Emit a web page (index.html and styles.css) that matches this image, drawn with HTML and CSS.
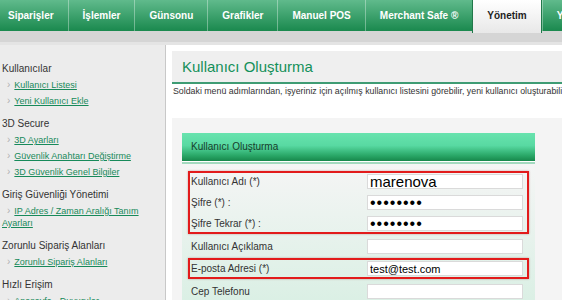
FILE: index.html
```html
<!DOCTYPE html>
<html lang="tr">
<head>
  <meta charset="UTF-8" />
  <title>Yönetim - Kullanıcı Oluşturma</title>
  <link rel="stylesheet" href="styles.css">
</head>
<body>

  <!-- ust menu -->
  <div class="top-nav">
    <div class="tab">Siparişler</div>
    <div class="tab">İşlemler</div>
    <div class="tab">Günsonu</div>
    <div class="tab">Grafikler</div>
    <div class="tab">Manuel POS</div>
    <div class="tab">Merchant Safe ®</div>
    <div class="tab active">Yönetim</div>
    <div class="tab">Yardım</div>
  </div>
  <div class="sub-bar"></div>

  <div class="layout">
    <!-- sol menu -->
    <div class="sidebar">
      <div class="side-group">
        <div class="side-title">Kullanıcılar</div>
        <div class="side-link"><a href="#">Kullanıcı Listesi</a></div>
        <div class="side-link"><a href="#">Yeni Kullanıcı Ekle</a></div>
      </div>
      <div class="side-group">
        <div class="side-title">3D Secure</div>
        <div class="side-link"><a href="#">3D Ayarları</a></div>
        <div class="side-link"><a href="#">Güvenlik Anahtarı Değiştirme</a></div>
        <div class="side-link"><a href="#">3D Güvenlik Genel Bilgiler</a></div>
      </div>
      <div class="side-group">
        <div class="side-title">Giriş Güvenliği Yönetimi</div>
        <div class="side-link"><a href="#">IP Adres / Zaman Aralığı Tanım Ayarları</a></div>
      </div>
      <div class="side-group">
        <div class="side-title">Zorunlu Sipariş Alanları</div>
        <div class="side-link"><a href="#">Zorunlu Sipariş Alanları</a></div>
      </div>
      <div class="side-group">
        <div class="side-title">Hızlı Erişim</div>
        <div class="side-link"><a href="#">Anasayfa - Duyurular</a></div>
      </div>
    </div>

    <!-- icerik -->
    <div class="content">
      <div class="page-title">Kullanıcı Oluşturma</div>
      <p class="intro">Soldaki menü adımlarından, işyeriniz için açılmış kullanıcı listesini görebilir, yeni kullanıcı oluşturabilirsiniz.</p>

      <div class="panel">
        <div class="form-box">
          <div class="form-head">Kullanıcı Oluşturma</div>
          <div class="form-body">
            <div class="mark">
              <div class="row">
                <label>Kullanıcı Adı (*)</label>
                <input type="text" class="big" value="marenova">
              </div>
              <div class="row">
                <label>Şifre (*) :</label>
                <input type="password" class="pass" value="12345678">
              </div>
              <div class="row">
                <label>Şifre Tekrar (*) :</label>
                <input type="password" class="pass" value="12345678">
              </div>
            </div>
            <div class="row plain">
              <label>Kullanıcı Açıklama</label>
              <input type="text" value="">
            </div>
            <div class="mark">
              <div class="row">
                <label>E-posta Adresi (*)</label>
                <input type="text" value="test@test.com">
              </div>
            </div>
            <div class="row plain">
              <label>Cep Telefonu</label>
              <input type="text" value="">
            </div>
          </div>
        </div>
      </div>
    </div>
  </div>

</body>
</html>
```

FILE: styles.css
```css
body {
  margin: 0;
  font-family: Tahoma, "Liberation Sans", Arial, sans-serif;
  font-size: 10px;
  color: #333;
  background: #fff;
  overflow: hidden;
}

/* ust menu */
.top-nav {
  display: flex;
  align-items: flex-start;
  height: 31px;
  background: linear-gradient(#60ba8c, #1a894e);
}

.top-nav .tab {
  height: 31px;
  line-height: 31px;
  padding: 0 14px;
  color: #fff;
  font-weight: bold;
  font-size: 10px;
  white-space: nowrap;
  border-left: 1px solid rgba(255, 255, 255, 0.35);
}

.top-nav .tab:first-child {
  padding-left: 8px;
  border-left: none;
}

.top-nav .tab.active {
  position: relative;
  z-index: 1;
  height: 33px;
  color: #1e1e1e;
  background: linear-gradient(#fff, #e8e8e8);
  border-left: 1px solid #21784a;
  border-right: 1px solid #21784a;
}

.sub-bar {
  height: 11px;
  background: #d5d5d5;
  border-bottom: 3px solid #e4e4e4;
}

.layout {
  display: flex;
}

/* sol menu */
.sidebar {
  flex: none;
  width: 163px;
  min-height: calc(100vh - 45px);
  padding: 16px 0 0 2px;
  background: #ececec;
  border-right: 1px solid #c8c8c8;
}

.side-group {
  margin-bottom: 7px;
}

.side-title,
.side-link {
  padding: 2px 0;
  line-height: 12px;
}

.side-title {
  color: #333;
  font-size: 10px;
}

.side-link {
  font-size: 9px;
}

.side-link::before {
  content: '›';
  color: #b2b2b2;
  font-size: 10px;
  margin: 0 4px 0 5px;
}

.side-link a {
  color: #178a5a;
  text-decoration: underline;
}

/* icerik */
.content {
  flex-grow: 1;
  margin-left: 6px;
}

.page-title {
  margin-top: 6px;
  height: 31px;
  line-height: 31px;
  padding-left: 10px;
  background: #efefef;
  border-bottom: 2px solid #3f9c74;
  font-size: 15px;
  color: #14905a;
}

.intro {
  margin: 0;
  padding: 1px 0 0 1px;
  line-height: 13px;
  font-size: 8.8px;
  white-space: nowrap;
  overflow: hidden;
}

.panel {
  margin-top: 20px;
  padding: 15px 0 0 10px;
  background: #f4f4f4;
  min-height: 200px;
}

.form-box {
  width: 353px;
}

.form-head {
  height: 28px;
  line-height: 28px;
  padding-left: 9px;
  color: #163d2b;
  background: linear-gradient(#68e3ae 0%, #58d9a2 45%, #2aa868 80%, #17874b 100%);
  border-bottom: 1px solid #fff;
}

.form-body {
  display: flex;
  flex-direction: column;
  gap: 4px;
  min-height: 150px;
  padding: 7px 6px 0;
  border-top: 2px solid #a3dabf;
  background: linear-gradient(#f5f5f5, #d8efe3 150px);
}

.mark {
  display: flex;
  flex-direction: column;
  gap: 6px;
  padding: 1px 4px 1px 1px;
  border: 2px solid #e21b1b;
  box-shadow: 0 0 2px rgba(120, 0, 0, 0.35);
}

.row {
  display: flex;
  align-items: center;
  height: 15px;
}

.row.plain {
  padding-left: 3px;
  margin-top: 1px;
}

.row label {
  flex: none;
  width: 176px;
  line-height: 15px;
  color: #333;
}

.row input {
  box-sizing: border-box;
  width: 156px;
  height: 15px;
  margin: 0;
  padding: 0 2px;
  border: 1px solid #dadada;
  background: #fff;
  font-family: "Liberation Sans", Arial, sans-serif;
  font-size: 11px;
  line-height: 13px;
  color: #000;
  outline: none;
}

.row input.big {
  font-size: 15px;
}

.row input.pass {
  font-size: 16px;
  letter-spacing: 1px;
}
```
